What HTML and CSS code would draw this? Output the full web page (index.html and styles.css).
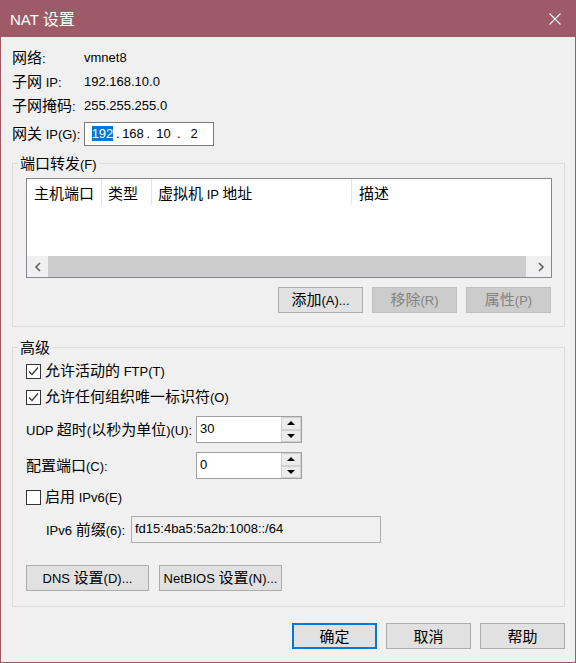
FILE: index.html
```html
<!DOCTYPE html>
<html lang="zh-CN">
<head>
<meta charset="utf-8">
<title>NAT 设置</title>
<link rel="stylesheet" href="styles.css">
</head>
<body>
<div class="window">
  <div class="titlebar">
    <div class="title">NAT <span class="zt">设置</span></div>
    <svg class="close" width="12" height="12" viewBox="0 0 12 12"><path d="M0.5 0.5L11.5 11.5M11.5 0.5L0.5 11.5" stroke="#ffffff" stroke-width="1.1" fill="none"/></svg>
  </div>
  <div class="client">
    <div class="info-row"><span class="lbl"><span class="z">网络</span>:</span><span>vmnet8</span></div>
    <div class="info-row"><span class="lbl"><span class="z">子网</span> IP:</span><span>192.168.10.0</span></div>
    <div class="info-row"><span class="lbl"><span class="z">子网掩码</span>:</span><span>255.255.255.0</span></div>
    <div class="gw-row">
      <span class="lbl"><span class="z">网关</span> IP(G):</span>
      <div class="ipbox">
        <span class="oct"><span class="sel">192</span></span><span class="dot">.</span><span class="oct">168</span><span class="dot">.</span><span class="oct">10</span><span class="dot">.</span><span class="oct">2</span>
      </div>
    </div>

    <div class="group g1">
      <div class="legend"><span class="z">端口转发</span>(F)</div>
      <div class="list">
        <div class="lhead">
          <div class="col c1"><span class="z">主机端口</span></div>
          <div class="col c2"><span class="z">类型</span></div>
          <div class="col c3"><span><span class="z">虚拟机</span> IP <span class="z">地址</span></span></div>
          <div class="col c4"><span class="z">描述</span></div>
        </div>
        <div class="lbody"></div>
        <div class="hscroll">
          <div class="arrow"><svg width="8" height="10" viewBox="0 0 8 10"><path d="M6 1L2 5L6 9" stroke="#606060" stroke-width="1.6" fill="none"/></svg></div>
          <div class="thumb"></div>
          <div class="arrow"><svg width="8" height="10" viewBox="0 0 8 10"><path d="M2 1L6 5L2 9" stroke="#606060" stroke-width="1.6" fill="none"/></svg></div>
        </div>
      </div>
      <div class="btnrow">
        <div class="btn"><span><span class="z">添加</span>(A)...</span></div>
        <div class="btn dis"><span><span class="z">移除</span>(R)</span></div>
        <div class="btn dis"><span><span class="z">属性</span>(P)</span></div>
      </div>
    </div>

    <div class="group g2">
      <div class="legend"><span class="z">高级</span></div>
      <div class="cb-row">
        <span class="cb"><svg width="13" height="13" viewBox="0 0 13 13"><path d="M2 6.5L5 9.5L11 2.5" stroke="#3c3c3c" stroke-width="1.3" fill="none"/></svg></span>
        <span><span class="z">允许活动的</span> FTP(T)</span>
      </div>
      <div class="cb-row cb2">
        <span class="cb"><svg width="13" height="13" viewBox="0 0 13 13"><path d="M2 6.5L5 9.5L11 2.5" stroke="#3c3c3c" stroke-width="1.3" fill="none"/></svg></span>
        <span><span class="z">允许任何组织唯一标识符</span>(O)</span>
      </div>
      <div class="spin-row">
        <span class="slbl">UDP <span class="z">超时</span>(<span class="z">以秒为单位</span>)(U):</span>
        <div class="spin">
          <div class="stext">30</div>
          <div class="sbtns"><div class="sb up"></div><div class="sb down"></div></div>
        </div>
      </div>
      <div class="spin-row">
        <span class="slbl"><span class="z">配置端口</span>(C):</span>
        <div class="spin">
          <div class="stext">0</div>
          <div class="sbtns"><div class="sb up"></div><div class="sb down"></div></div>
        </div>
      </div>
      <div class="cb-row cb3">
        <span class="cb"></span>
        <span><span class="z">启用</span> IPv6(E)</span>
      </div>
      <div class="v6-row">
        <span class="v6lbl">IPv6 <span class="z">前缀</span>(6):</span>
        <div class="v6box">fd15:4ba5:5a2b:1008::/64</div>
      </div>
      <div class="dns-row">
        <div class="btn wide"><span>DNS <span class="z">设置</span>(D)...</span></div>
        <div class="btn wide"><span>NetBIOS <span class="z">设置</span>(N)...</span></div>
      </div>
    </div>

    <div class="footer">
      <div class="btn default"><span class="z">确定</span></div>
      <div class="btn"><span class="z">取消</span></div>
      <div class="btn"><span class="z">帮助</span></div>
    </div>
  </div>
</div>
</body>
</html>
```

FILE: styles.css
```css
* { box-sizing: border-box; }
html, body { margin: 0; padding: 0; }
body {
  font-family: "Liberation Sans", "Noto Sans CJK SC", sans-serif;
  font-size: 13px;
  color: #000;
  background: #ffffff;
}
.z {
  font-family: "Noto Sans CJK SC", sans-serif;
  font-size: 15px;
}
.zt {
  font-family: "Noto Sans CJK SC", sans-serif;
  font-size: 16px;
}

.window {
  width: 576px;
  height: 663px;
  background: #f0f0f0;
  border: 1px solid #9e5b67;
  border-top: none;
  display: flex;
  flex-direction: column;
}
.titlebar {
  height: 37px;
  flex: none;
  background: #9e5b67;
  color: #ffffff;
  display: flex;
  align-items: center;
  justify-content: space-between;
  padding: 0 14px 0 9px;
}
.title {
  font-size: 15px;
  line-height: 20px;
}

.client {
  flex: 1;
  padding: 9px 10px 0 11px;
}

.info-row, .gw-row {
  display: flex;
  align-items: center;
  height: 24px;
  line-height: 20px;
}
.gw-row { margin-top: 4px; }
.lbl { width: 72px; flex: none; }

.ipbox {
  width: 130px;
  height: 24px;
  border: 1px solid #7a7a7a;
  background: #ffffff;
  display: flex;
  align-items: center;
  padding-left: 6px;
}
.oct { width: 23px; text-align: center; flex: none; }
.dot { width: 7.5px; text-align: center; flex: none; }
.sel {
  background: #0078d7;
  color: #ffffff;
  line-height: 15px;
  display: inline-block;
}

.group {
  position: relative;
  width: 553px;
  border: 1px solid #dcdcdc;
}
.legend {
  position: absolute;
  top: -11px;
  left: 5px;
  padding: 0 2px;
  background: #f0f0f0;
  line-height: 20px;
}
.g1 {
  margin-top: 17px;
  padding: 14px 12px 13px 13px;
}
.list {
  height: 100px;
  border: 1px solid #828790;
  background: #ffffff;
  display: flex;
  flex-direction: column;
}
.lhead {
  height: 26px;
  display: flex;
  flex: none;
}
.col {
  display: flex;
  align-items: center;
  border-right: 1px solid #e5e5e5;
  padding-left: 6px;
  white-space: nowrap;
}
.c1 { width: 75px; padding-left: 7px; }
.c2 { width: 50px; }
.c3 { width: 200px; }
.c4 { flex: 1; border-right: none; padding-left: 7px; }
.lbody { flex: 1; }
.hscroll {
  height: 21px;
  flex: none;
  display: flex;
  background: #f0f0f0;
}
.arrow {
  width: 21px;
  flex: none;
  display: flex;
  align-items: center;
  justify-content: center;
}
.thumb {
  flex: 1;
  background: #cdcdcd;
  margin-right: 4px;
}

.btnrow {
  margin-top: 9px;
  display: flex;
  justify-content: flex-end;
  gap: 9px;
  padding-right: 1px;
}
.btn {
  width: 85px;
  height: 26px;
  border: 1px solid #adadad;
  background: #e1e1e1;
  display: flex;
  align-items: center;
  justify-content: center;
  line-height: 20px;
  white-space: nowrap;
}
.btn.dis {
  background: #cccccc;
  border-color: #bfbfbf;
  color: #838383;
}
.btn.wide { width: 123px; }
.btn.default { border: 2px solid #0078d7; }

.g2 {
  margin-top: 20px;
  padding: 13px 12px 15px 13px;
}
.cb-row {
  height: 20px;
  display: flex;
  align-items: center;
  gap: 4px;
  line-height: 20px;
}
.cb2 { margin-top: 6px; }
.cb3 { margin-top: 8px; }
.cb {
  width: 15px;
  height: 15px;
  border: 1px solid #333333;
  background: #ffffff;
  display: flex;
  align-items: center;
  justify-content: center;
  flex: none;
}
.spin-row {
  margin-top: 9px;
  height: 27px;
  display: flex;
  align-items: center;
  line-height: 20px;
}
.slbl { width: 170px; flex: none; white-space: nowrap; }
.spin {
  width: 106px;
  height: 27px;
  border: 1px solid #a0a0a0;
  background: #ffffff;
  display: flex;
}
.stext {
  flex: 1;
  padding-left: 3px;
  padding-bottom: 2px;
  display: flex;
  align-items: center;
}
.sbtns {
  width: 20px;
  display: flex;
  flex-direction: column;
}
.sb {
  flex: 1;
  background: #ececec;
  border: 1px solid #d2d2d2;
  display: flex;
  align-items: center;
  justify-content: center;
}
.sb.up::after {
  content: "";
  border-left: 4px solid transparent;
  border-right: 4px solid transparent;
  border-bottom: 4px solid #000000;
}
.sb.down::after {
  content: "";
  border-left: 4px solid transparent;
  border-right: 4px solid transparent;
  border-top: 4px solid #000000;
}
.v6-row {
  margin-top: 9px;
  height: 27px;
  display: flex;
  align-items: center;
  padding-left: 20px;
  line-height: 20px;
}
.v6lbl { width: 85px; flex: none; white-space: nowrap; }
.v6box {
  width: 250px;
  height: 27px;
  border: 1px solid #adadad;
  background: #f0f0f0;
  padding-left: 3px;
  padding-bottom: 2px;
  display: flex;
  align-items: center;
}
.dns-row {
  margin-top: 22px;
  display: flex;
  gap: 10px;
}

.footer {
  margin-top: 16px;
  display: flex;
  justify-content: flex-end;
  gap: 9px;
}
```
